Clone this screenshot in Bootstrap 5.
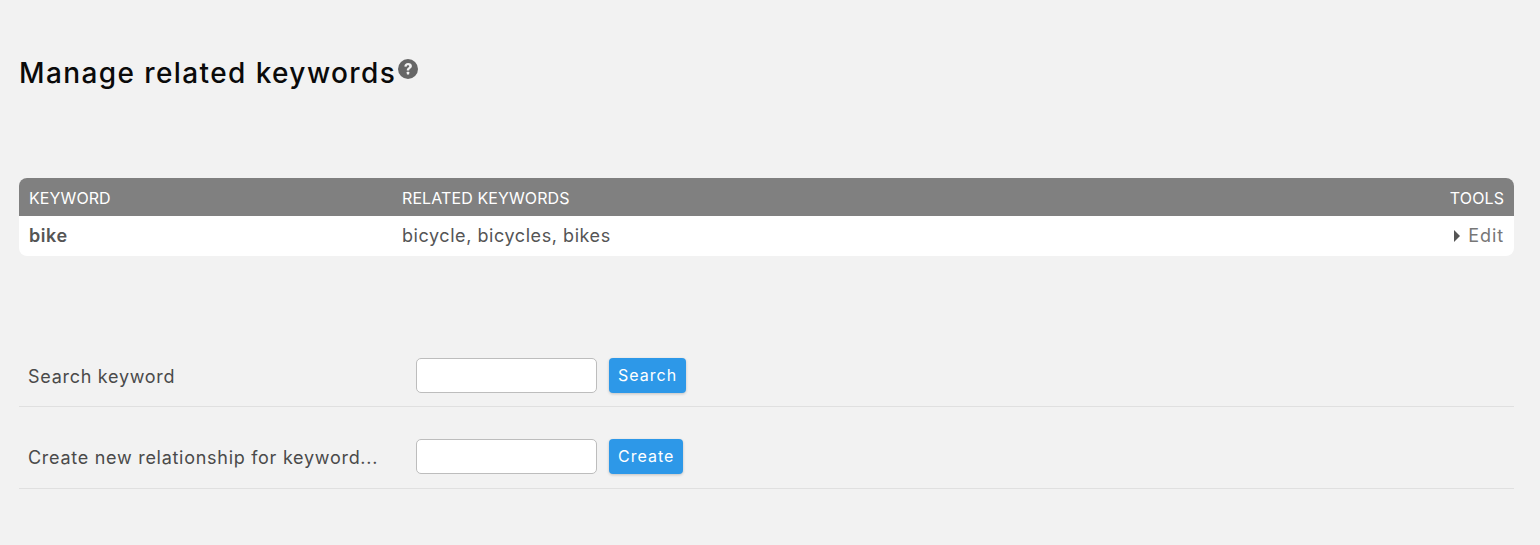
<!DOCTYPE html>
<html lang="en">
<head>
    <meta charset="UTF-8">
    <title>Manage related keywords</title>
    <link rel="stylesheet" href="https://cdn.jsdelivr.net/npm/bootstrap@5.3.3/dist/css/bootstrap.min.css">
    <style>
        body { background: #f2f2f2; font-family: "Inter", "Open Sans", sans-serif; color: #4a4a4a; }
        .page-wrap { padding: 52px 26px 0 19px; }
        .page-title { font-size: 28px; line-height: 42px; font-weight: 500; color: #0a0a0a; margin: 0; letter-spacing: 1.4px; }
        .help-icon { width: 20px; height: 20px; vertical-align: 4px; margin-left: 2px; }
        .kw-table { margin: 84px 0 0; border-radius: 8px; overflow: hidden; background: #fff; }
        .kw-head { background: #808080; color: #fff; height: 38px; padding-top: 1px; font-size: 16px; letter-spacing: .1px; }
        .kw-body { height: 40px; padding-bottom: 2px; font-size: 18px; color: #555; letter-spacing: .56px; }
        .kw-first { width: 383px; padding-left: 10px; }
        .kw-tools { padding-right: 10px; }
        .kw-edit { color: #777; letter-spacing: .9px; }
        .kw-arrow { width: 8px; height: 12px; margin-right: 7px; vertical-align: 0; }
        .form-rows { margin-top: 102px; }
        .form-line { border-bottom: 1px solid #e0e0e0; font-size: 18px; letter-spacing: .72px; padding-bottom: 13px; }
        .form-line + .form-line { margin-top: 32px; padding-bottom: 14px; }
        .line-label { width: 397px; padding-left: 9px; padding-top: 2px; }
        .kw-input { width: 181px; height: 35px; border: 1px solid #bdbdbd; border-radius: 5px; background: #fff; }
        .kw-btn { height: 35px; margin-left: 12px; padding: 0 9px 1px; background: #2d98e8; border: 0; border-radius: 4px; color: #fff; font-size: 16px; letter-spacing: 1px; box-shadow: 0 1px 3px rgba(0,0,0,.2); }
    </style>
</head>
<body>
    <div class="page-wrap">
        <h1 class="page-title">Manage related keywords<svg class="help-icon" viewBox="0 0 20 20"><circle cx="10" cy="10" r="10" fill="#666"/><path d="M6.300 7.500c.2-2.200 1.700-3.400 3.800-3.400 2.200 0 3.800 1.300 3.800 3 0 2.500-2.700 2.500-2.700 4.500H8.800c0-3 2.400-2.900 2.400-4.300 0-.6-.5-1-1.200-1-.8 0-1.200.4-1.400 1.400z" fill="#f2f2f2"/><rect x="8.800" y="12.800" width="2.400" height="2.700" rx=".4" fill="#f2f2f2"/></svg></h1>

        <div class="kw-table">
            <div class="kw-head d-flex align-items-center">
                <div class="kw-first">KEYWORD</div>
                <div class="flex-grow-1">RELATED KEYWORDS</div>
                <div class="kw-tools">TOOLS</div>
            </div>
            <div class="kw-body d-flex align-items-center">
                <div class="kw-first fw-semibold">bike</div>
                <div class="flex-grow-1">bicycle, bicycles, bikes</div>
                <div class="kw-tools kw-edit"><svg class="kw-arrow" viewBox="0 0 8 12"><path d="M1 0l6 6-6 6z" fill="#555"/></svg>Edit</div>
            </div>
        </div>

        <div class="form-rows">
            <div class="form-line d-flex align-items-center">
                <div class="line-label">Search keyword</div>
                <input class="kw-input" type="text">
                <button class="kw-btn" type="button">Search</button>
            </div>
            <div class="form-line d-flex align-items-center">
                <div class="line-label">Create new relationship for keyword...</div>
                <input class="kw-input" type="text">
                <button class="kw-btn" type="button">Create</button>
            </div>
        </div>
    </div>
    <script src="https://cdn.jsdelivr.net/npm/bootstrap@5.3.3/dist/js/bootstrap.bundle.min.js"></script>
</body>
</html>
